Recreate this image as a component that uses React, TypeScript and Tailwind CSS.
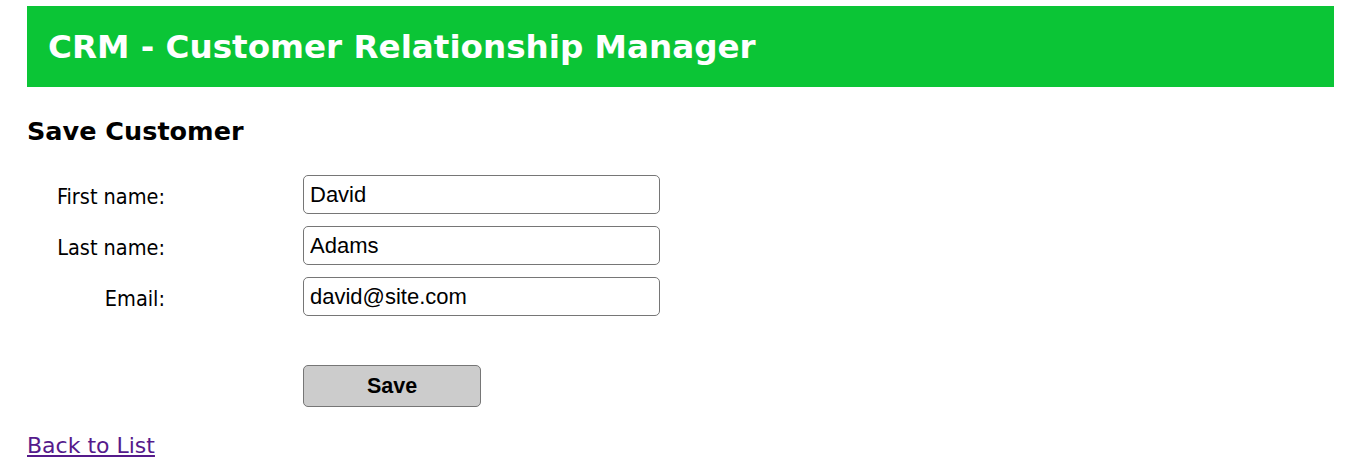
export default function App() {
  const fields = [
    { label: "First name:", value: "David" },
    { label: "Last name:", value: "Adams" },
    { label: "Email:", value: "david@site.com" },
  ];

  return (
    <div className="bg-white min-h-[475px] pt-[6px] pl-[27px] pr-[12px]">
      {/* Header bar */}
      <div className="bg-[#0bc536] h-[81px] flex items-center pl-[21px] pt-[1px]">
        <h1 className="text-white font-bold text-[32.6px] font-['DejaVu_Sans',sans-serif]">
          CRM - Customer Relationship Manager
        </h1>
      </div>

      <h3 className="mt-[29px] text-[25.5px] font-bold text-black font-['DejaVu_Sans',sans-serif] leading-[30px]">
        Save Customer
      </h3>

      {/* Form */}
      <form className="mt-[29px] flex flex-col gap-[12px]">
        {fields.map((f) => (
          <div key={f.label} className="flex items-center">
            <label className="w-[138px] pt-[5px] text-right text-[21.5px] text-black font-['DejaVu_Sans_Condensed','DejaVu_Sans',sans-serif]">
              {f.label}
            </label>
            <input
              defaultValue={f.value}
              className="ml-[138px] w-[357px] h-[39px] border border-[#767676] rounded-[5px] pl-[6px] pr-[6px] text-[22px] text-black font-['Liberation_Sans',Arial,sans-serif] outline-none"
            />
          </div>
        ))}
        <div className="flex mt-[37px]">
          <button
            type="button"
            className="ml-[276px] w-[178px] h-[42px] bg-[#cccccc] border border-[#767676] rounded-[5px] text-[21.5px] font-bold text-black font-['Liberation_Sans',Arial,sans-serif]"
          >
            Save
          </button>
        </div>
      </form>

      <div className="mt-[24px] leading-[30px]">
        <a
          href="#"
          className="text-[22px] text-[#551a8b] underline font-['DejaVu_Sans',sans-serif]"
        >
          Back to List
        </a>
      </div>
    </div>
  );
}
